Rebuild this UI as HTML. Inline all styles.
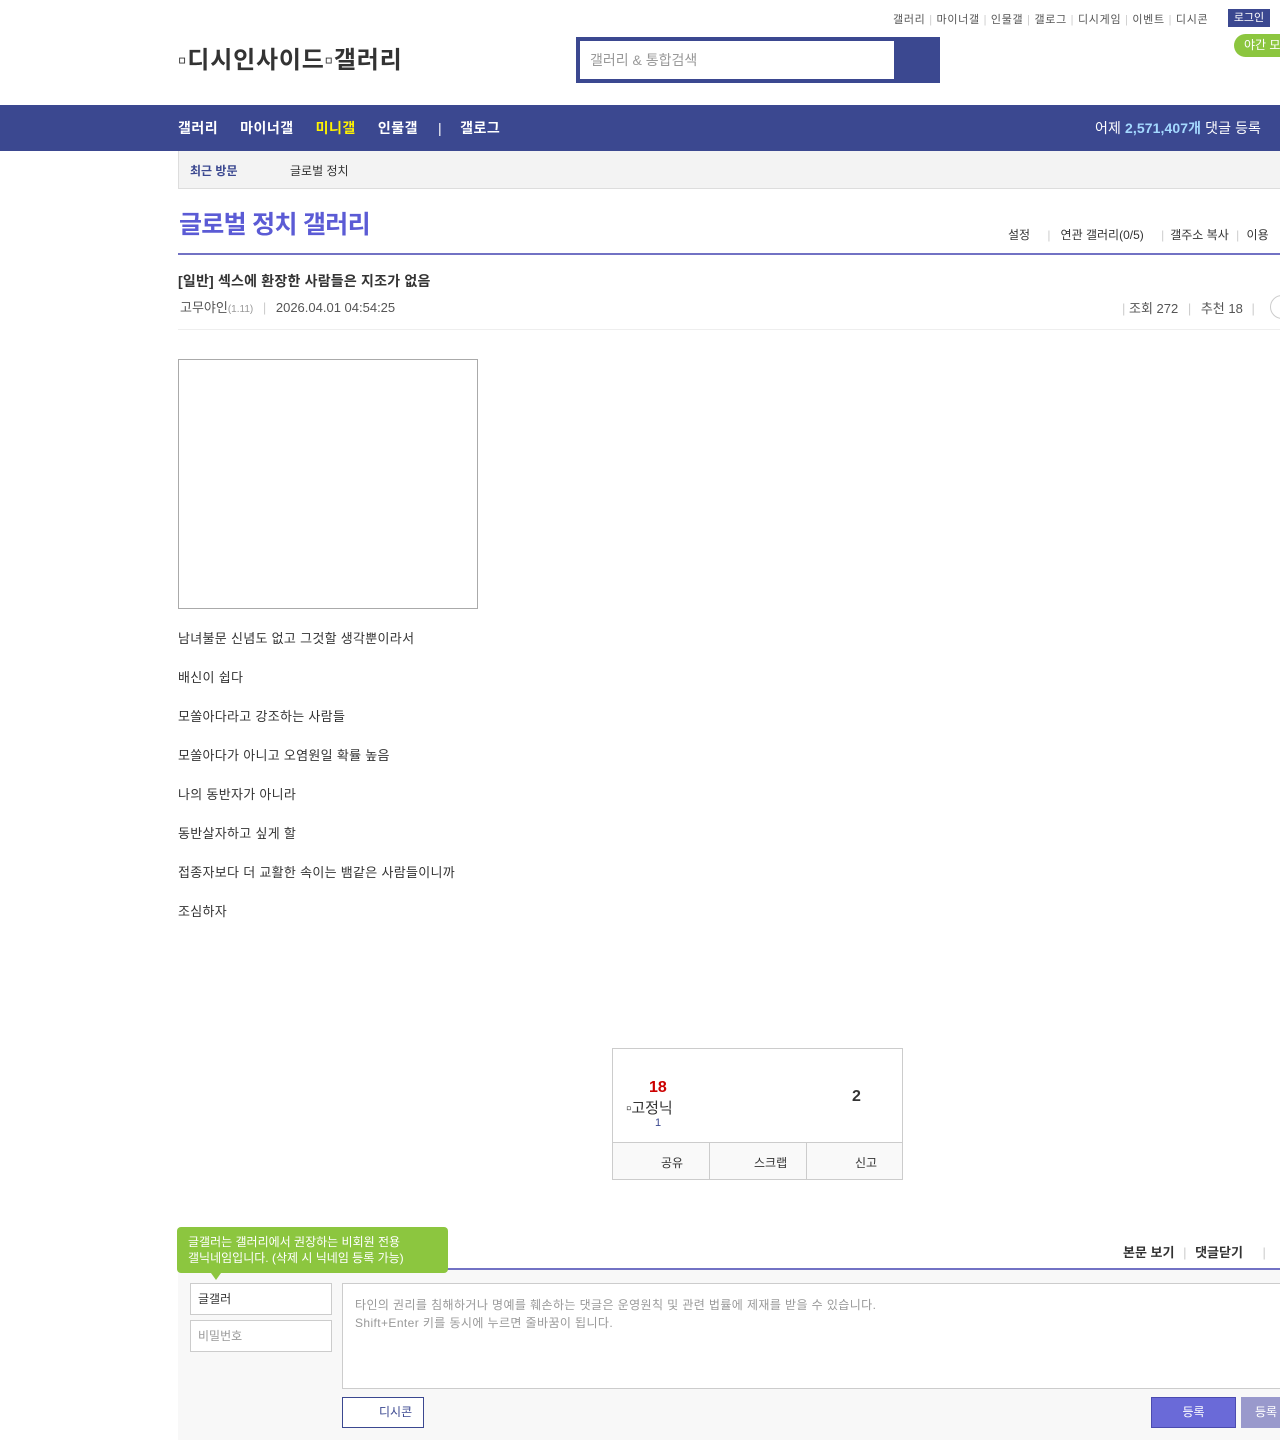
<!DOCTYPE html>
<html><head><meta charset="utf-8"><style>
*{margin:0;padding:0;box-sizing:border-box}
body{width:1280px;height:1440px;overflow:hidden;background:#fff;font-family:"Liberation Sans","Noto Sans CJK KR",sans-serif;color:#333;position:relative}
.a{position:absolute;white-space:nowrap}
</style></head><body>
<div class="a" style="left:893px;top:11px;font-size:11px;color:#555;letter-spacing:0.7px">갤러리 <span style="color:#ccc">|</span> 마이너갤 <span style="color:#ccc">|</span> 인물갤 <span style="color:#ccc">|</span> 갤로그 <span style="color:#ccc">|</span> 디시게임 <span style="color:#ccc">|</span> 이벤트 <span style="color:#ccc">|</span> 디시콘</div>
<div class="a" style="left:1228px;top:9px;width:42px;height:18px;background:#3b4890;color:#fff;font-size:11px;line-height:18px;text-align:center">로그인</div>
<div class="a" style="left:1234px;top:34px;width:60px;height:23px;background:#8cc63f;border-radius:12px;color:#fff;font-size:12px;line-height:23px;padding-left:10px">야간 모드</div>
<div class="a" style="left:178px;top:40px;font-size:24px;font-weight:bold;color:#333;letter-spacing:0.8px">▫디시인사이드▫갤러리</div>
<div class="a" style="left:576px;top:37px;width:364px;height:46px;background:#3b4890"></div>
<div class="a" style="left:580px;top:41px;width:314px;height:38px;background:#fff;font-size:14px;color:#999;line-height:38px;padding-left:10px">갤러리 &amp; 통합검색</div>
<div class="a" style="left:0;top:105px;width:1280px;height:46px;background:#3b4890"></div>
<div class="a" style="left:178px;top:105px;line-height:46px;font-size:14px;font-weight:bold;color:#fff;letter-spacing:0.5px">갤러리<span style="margin-left:22px">마이너갤</span><span style="margin-left:22px;color:#fff200">미니갤</span><span style="margin-left:22px">인물갤</span><span style="margin-left:20px;color:#fff;font-weight:normal">|</span><span style="margin-left:18px">갤로그</span></div>
<div class="a" style="left:1095px;top:105px;line-height:46px;font-size:14px;color:#fff;letter-spacing:0.1px">어제 <b style="color:#a4d9ff">2,571,407개</b> 댓글 등록</div>
<div class="a" style="left:178px;top:151px;width:1110px;height:38px;background:#f3f3f3;border:1px solid #ddd;border-top:none"></div>
<div class="a" style="left:190px;top:162px;font-size:12px;color:#3b4890;font-weight:bold">최근 방문</div>
<div class="a" style="left:290px;top:162px;font-size:12px;color:#333">글로벌 정치</div>
<div class="a" style="left:179px;top:205px;font-size:25px;color:#5b5bd5;font-weight:bold;letter-spacing:-0.7px">글로벌 정치 갤러리</div>
<div class="a" style="left:1008px;top:226px;font-size:12px;color:#333">설정 <span style="color:#ccc;margin:0 10px 0 14px">|</span>연관 갤러리(0/5) <span style="color:#ccc;margin:0 6px 0 14px">|</span>갤주소 복사 <span style="color:#ccc;margin:0 4px">|</span> 이용</div>
<div class="a" style="left:178px;top:253px;width:1110px;height:2px;background:#7272c4"></div>
<div class="a" style="left:178px;top:271px;font-size:14px;font-weight:bold;color:#333;letter-spacing:0.2px">[일반] 섹스에 환장한 사람들은 지조가 없음</div>
<div class="a" style="left:180px;top:297px;font-size:13px;color:#555">고무야인<span style="font-size:10px;color:#999">(1.11)</span> <span style="color:#ccc;margin:0 6px">|</span> 2026.04.01 04:54:25</div>
<div class="a" style="left:1122px;top:298px;font-size:13px;color:#555"><span style="color:#ccc">|</span> 조회 272 <span style="color:#ccc;margin:0 6px">|</span> 추천 18 <span style="color:#ccc;margin:0 5px">|</span></div>
<div class="a" style="left:1270px;top:295px;width:24px;height:24px;border:1px solid #ccc;border-radius:12px"></div>
<div class="a" style="left:178px;top:329px;width:1110px;height:1px;background:#eee"></div>
<div class="a" style="left:178px;top:359px;width:300px;height:250px;border:1px solid #aaa"></div>
<div class="a" style="left:178px;top:619px;font-size:13px;color:#333;line-height:39px;white-space:normal;letter-spacing:0.3px">남녀불문 신념도 없고 그것할 생각뿐이라서<br>배신이 쉽다<br>모쏠아다라고 강조하는 사람들<br>모쏠아다가 아니고 오염원일 확률 높음<br>나의 동반자가 아니라<br>동반살자하고 싶게 할<br>접종자보다 더 교활한 속이는 뱀같은 사람들이니까<br>조심하자</div>
<div class="a" style="left:612px;top:1048px;width:291px;height:132px;border:1px solid #ccc"></div>
<div class="a" style="left:649px;top:1079px;font-size:16px;font-weight:bold;color:#c00">18</div>
<div class="a" style="left:626px;top:1097px;font-size:15px;color:#333">▫고정닉</div>
<div class="a" style="left:655px;top:1117px;font-size:11px;color:#3b4890">1</div>
<div class="a" style="left:852px;top:1088px;font-size:16px;font-weight:bold;color:#333">2</div>
<div class="a" style="left:613px;top:1142px;width:289px;height:37px;background:#f9f9f9;border-top:1px solid #ccc;font-size:12px;line-height:40px"><span class="a" style="left:48px">공유</span><span class="a" style="left:96px;top:0;width:1px;height:37px;background:#ccc"></span><span class="a" style="left:141px">스크랩</span><span class="a" style="left:193px;top:0;width:1px;height:37px;background:#ccc"></span><span class="a" style="left:242px">신고</span></div>
<div class="a" style="left:1123px;top:1242px;font-size:13px;font-weight:bold;color:#333">본문 보기 <span style="color:#ccc;font-weight:normal;margin:0 5px">|</span> 댓글닫기 <span style="color:#ccc;font-weight:normal;margin-left:16px">|</span></div>
<div class="a" style="left:178px;top:1268px;width:1110px;height:2px;background:#7272c4"></div>
<div class="a" style="left:178px;top:1270px;width:1110px;height:170px;background:#f8f8f8"></div>
<div class="a" style="left:177px;top:1227px;width:271px;height:46px;background:#8cc63f;border-radius:4px;color:#fff;font-size:12px;line-height:16px;padding:7px 11px;white-space:normal">글갤러는 갤러리에서 권장하는 비회원 전용<br>갤닉네임입니다. (삭제 시 닉네임 등록 가능)</div>
<div class="a" style="left:211px;top:1273px;width:0;height:0;border-left:5px solid transparent;border-right:5px solid transparent;border-top:7px solid #8cc63f"></div>
<div class="a" style="left:190px;top:1283px;width:142px;height:32px;background:#fff;border:1px solid #ccc;font-size:12px;line-height:30px;padding-left:7px;color:#333">글갤러</div>
<div class="a" style="left:190px;top:1320px;width:142px;height:32px;background:#fff;border:1px solid #ccc;font-size:12px;line-height:30px;padding-left:7px;color:#999">비밀번호</div>
<div class="a" style="left:342px;top:1283px;width:950px;height:106px;background:#fff;border:1px solid #ccc;font-size:12px;line-height:18px;padding:12px;color:#999;letter-spacing:0.4px">타인의 권리를 침해하거나 명예를 훼손하는 댓글은 운영원칙 및 관련 법률에 제재를 받을 수 있습니다.<br>Shift+Enter 키를 동시에 누르면 줄바꿈이 됩니다.</div>
<div class="a" style="left:342px;top:1397px;width:82px;height:31px;background:#fff;border:1px solid #3b4890;font-size:12px;line-height:29px;padding-left:36px;color:#3b4890">디시콘</div>
<div class="a" style="left:1151px;top:1397px;width:85px;height:31px;background:#6a6ad8;border:1px solid #4b4bb0;color:#fff;font-size:12px;line-height:29px;text-align:center">등록</div>
<div class="a" style="left:1241px;top:1397px;width:60px;height:31px;background:#9999cc;color:#fff;font-size:12px;line-height:31px;padding-left:14px">등록</div>
</body></html>
